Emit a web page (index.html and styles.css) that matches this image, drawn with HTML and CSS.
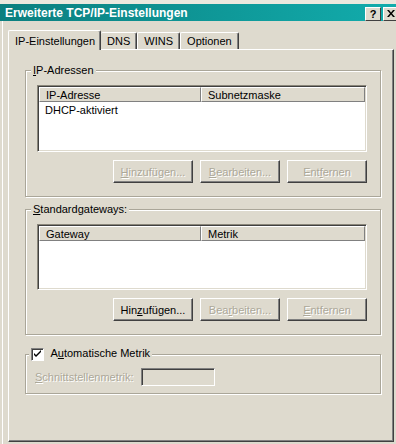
FILE: index.html
```html
<!DOCTYPE html>
<html lang="de">
<head>
    <meta charset="UTF-8">
    <title>Erweiterte TCP/IP-Einstellungen</title>
    <link rel="stylesheet" href="styles.css">
</head>
<body>
<div class="window">
    <div class="top-strip"></div>
    <div class="titlebar">
        <span class="title">Erweiterte TCP/IP-Einstellungen</span>
        <div class="title-buttons">
            <span class="tb-btn help">?</span>
            <span class="tb-btn close">
                <svg width="8" height="7" viewBox="0 0 8 7"><path d="M0 0h2l2 2.5L6 0h2L5 3.5 8 7H6L4 4.5 2 7H0l3-3.5z" fill="#000"/></svg>
            </span>
        </div>
    </div>
    <div class="client">
        <div class="tabs">
            <div class="tab active">IP-Einstellungen</div>
            <div class="tab">DNS</div>
            <div class="tab">WINS</div>
            <div class="tab">Optionen</div>
        </div>
        <div class="panel">
            <fieldset class="group group-ip">
                <legend><u>I</u>P-Adressen</legend>
                <div class="list">
                    <div class="list-head">
                        <div class="col col-1">IP-Adresse</div>
                        <div class="col col-2">Subnetzmaske</div>
                    </div>
                    <div class="list-body">
                        <div class="row">DHCP-aktiviert</div>
                    </div>
                </div>
                <div class="btn-row">
                    <button class="btn" disabled><u>H</u>inzufügen...</button>
                    <button class="btn" disabled><u>B</u>earbeiten...</button>
                    <button class="btn" disabled>Ent<u>f</u>ernen</button>
                </div>
            </fieldset>

            <fieldset class="group group-gw">
                <legend><u>S</u>tandardgateways:</legend>
                <div class="list list-gw">
                    <div class="list-head">
                        <div class="col col-1">Gateway</div>
                        <div class="col col-2">Metrik</div>
                    </div>
                    <div class="list-body"></div>
                </div>
                <div class="btn-row">
                    <button class="btn">Hin<u>z</u>ufügen...</button>
                    <button class="btn" disabled>Bea<u>r</u>beiten...</button>
                    <button class="btn" disabled><u>E</u>ntfernen</button>
                </div>
            </fieldset>

            <fieldset class="group group-metric">
                <legend>
                    <span class="checkbox">
                        <svg width="9" height="9" viewBox="0 0 9 9"><path d="M1 3v2l2 2 5-5V0L3 5z" fill="#000"/></svg>
                    </span>
                    A<u>u</u>tomatische Metrik
                </legend>
                <div class="metric-row">
                    <span class="disabled-text"><u>S</u>chnittstellenmetrik:</span>
                    <span class="edit"></span>
                </div>
            </fieldset>
        </div>
    </div>
</div>
</body>
</html>
```

FILE: styles.css
```css
body {
    margin: 0;
    background: #dedace;
    font-family: "Liberation Sans", Arial, sans-serif;
    font-size: 11px;
    color: #000;
}

.window {
    width: 396px;
    height: 444px;
    overflow: hidden;
    background: #dedace;
}

.top-strip {
    height: 4px;
    background: #ebe8de;
}

.titlebar {
    height: 17px;
    display: flex;
    align-items: center;
    justify-content: space-between;
    padding-left: 5px;
    background: linear-gradient(to right, #0b7f7f, #12acac);
}

.title {
    color: #fff;
    font-weight: bold;
    font-size: 12px;
}

.title-buttons {
    display: flex;
    gap: 2px;
    margin-top: 2px;
    margin-right: -3px;
}

.tb-btn {
    width: 14px;
    height: 12px;
    display: flex;
    align-items: center;
    justify-content: center;
    background: #dedace;
    border: 1px solid;
    border-color: #fff #404040 #404040 #fff;
    font-weight: bold;
    font-size: 11px;
    line-height: 12px;
}

.client {
    border-left: 2px solid #dedace;
    box-shadow: inset 1px 0 #fff;
    padding: 9px 2px 2px 6px;
}

/* tabs */
.tabs {
    display: flex;
    align-items: flex-end;
    height: 19px;
}

.tab {
    height: 17px;
    box-sizing: border-box;
    padding: 2px 6px 0 6px;
    border-top: 1px solid #fff;
    border-left: 1px solid #fff;
    border-right: 1px solid #404040;
    border-radius: 2px 2px 0 0;
    box-shadow: inset -1px 0 #808080;
    line-height: 13px;
    background: #dedace;
}

.tab.active {
    height: 20px;
    margin-bottom: -1px;
    padding: 4px 5px 0 6px;
    position: relative;
    z-index: 1;
}

.tabs .tab:nth-child(2) {
    border-left: none;
}

.panel {
    height: 393px;
    box-sizing: border-box;
    border: 1px solid;
    border-color: #fff #404040 #404040 #fff;
    box-shadow: inset -1px -1px #808080;
    padding: 14px 0 0 16px;
}

/* group boxes */
.group {
    width: 356px;
    box-sizing: border-box;
    margin: 0;
    border: 1px solid #aaa699;
    box-shadow: inset 1px 1px #fff, 1px 1px #fff;
    padding: 8px 13px 13px 11px;
}

.group legend {
    margin-left: -6px;
    padding: 0 2px;
    line-height: 13px;
    background: #dedace;
}

.group-gw {
    margin-top: 6px;
    padding-top: 8px;
}

.group-metric {
    margin-top: 12px;
    padding: 7px 13px 7px 9px;
}

/* list views */
.list {
    height: 67px;
    box-sizing: border-box;
    border: 1px solid;
    border-color: #8a867a #fff #fff #8a867a;
    box-shadow: inset 1px 1px #404040, inset -1px -1px #dedace;
    background: #fff;
    padding: 1px;
}

.list-gw {
    height: 66px;
}

.list-head {
    display: flex;
    height: 15px;
    background: #dedace;
}

.col {
    box-sizing: border-box;
    height: 15px;
    padding-left: 6px;
    line-height: 14px;
    border-top: 1px solid #fff;
    border-left: 1px solid #fff;
    border-bottom: 1px solid #808080;
    border-right: 1px solid #808080;
}

.col-1 {
    width: 162px;
}

.col-2 {
    width: 164px;
}

.row {
    padding: 2px 0 0 6px;
    line-height: 13px;
}

/* buttons */
.btn-row {
    display: flex;
    justify-content: flex-end;
    gap: 7px;
    margin-top: 8px;
}

.btn {
    width: 80px;
    height: 23px;
    margin: 0;
    padding: 0;
    background: #dedace;
    border: 1px solid;
    border-color: #fff #404040 #404040 #fff;
    box-shadow: inset -1px -1px #808080;
    font-family: "Liberation Sans", Arial, sans-serif;
    font-size: 11px;
    color: #000;
}

.btn:disabled,
.disabled-text {
    color: #aca899;
    text-shadow: 1px 1px #fff;
}

/* metric box */
.checkbox {
    display: inline-flex;
    align-items: center;
    justify-content: center;
    width: 11px;
    height: 11px;
    vertical-align: -2px;
    margin-right: 4px;
    background: #fff;
    border: 1px solid;
    border-color: #808080 #fff #fff #808080;
    box-shadow: inset 1px 1px #404040;
}

.metric-row {
    display: flex;
    align-items: center;
    gap: 8px;
}

.edit {
    width: 74px;
    height: 18px;
    box-sizing: border-box;
    border: 1px solid;
    border-color: #808080 #fff #fff #808080;
    box-shadow: inset 1px 1px #404040;
    background: #dedace;
}
```
